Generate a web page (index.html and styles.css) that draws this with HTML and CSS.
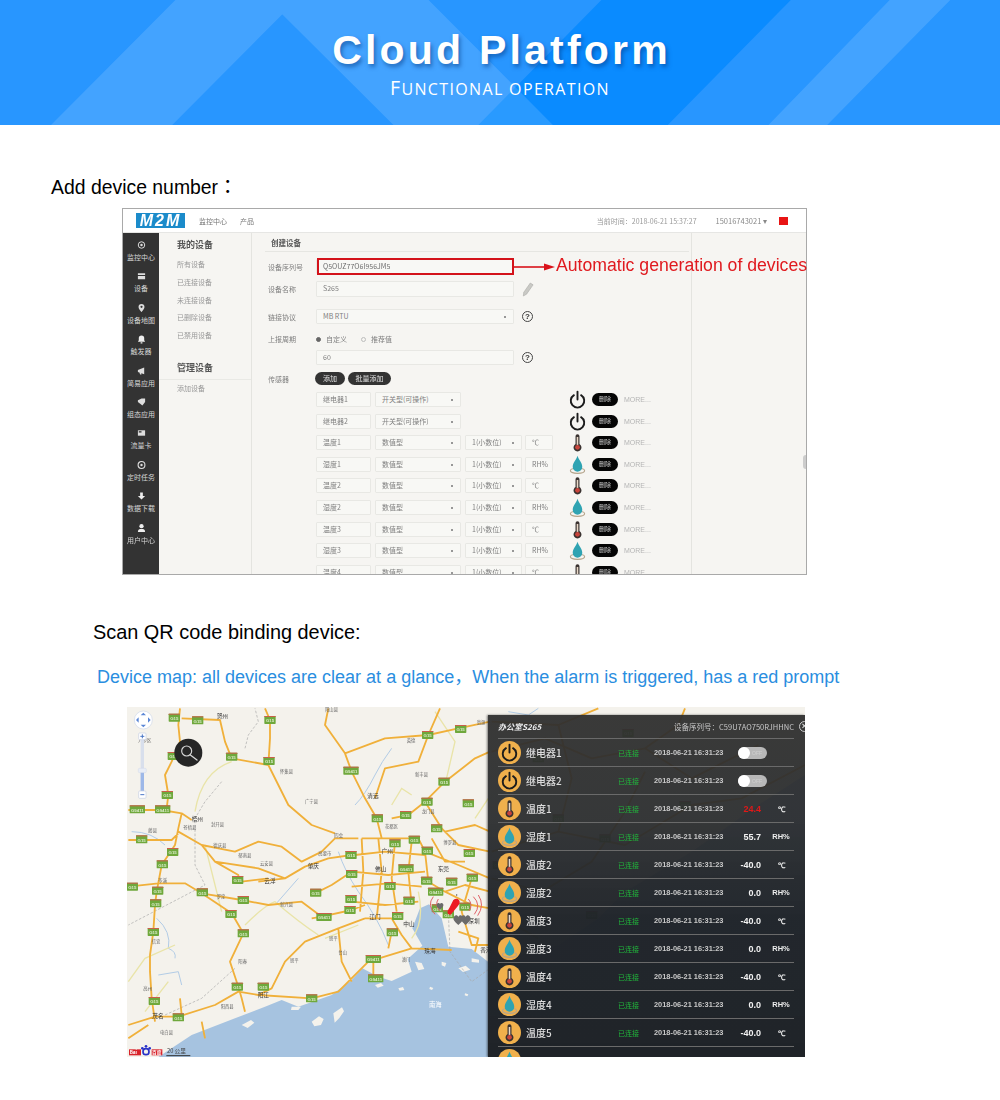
FILE: index.html
```html
<!DOCTYPE html>
<html lang="en">
<head>
<meta charset="utf-8">
<title>Cloud Platform</title>
<link rel="stylesheet" href="styles.css">
</head>
<body>
<svg class="defs" aria-hidden="true">
  <defs>
    <symbol id="power" viewBox="0 0 24 24"><path d="M7.5 6.5a8.5 8.5 0 1 0 9 0M12 2v10" fill="none" stroke="#1c1c1c" stroke-width="2.4" stroke-linecap="round"/></symbol>
    <symbol id="thermo" viewBox="0 0 24 24"><path d="M9.5 14V4a2.5 2.5 0 0 1 5 0v10a5 5 0 1 1-5 0z" fill="#3a3230"/><path d="M11 5h2v10h-2z" fill="#e8d8c8"/><circle cx="12" cy="18" r="3" fill="#c8453c"/></symbol>
    <symbol id="drop" viewBox="0 0 24 24"><ellipse cx="12" cy="20" rx="9" ry="3.2" fill="none" stroke="#b5a58c" stroke-width="1.4"/><path d="M12 1C10 7 6 10 6 15a6 6 0 0 0 12 0c0-5-4-8-6-14z" fill="#2fa3b2"/></symbol>
    <g id="sh"><rect x="-17" y="-12" width="34" height="24" rx="2" fill="#6fa83c"/><rect x="-17" y="-12" width="34" height="3" fill="#c9604a"/><text x="0" y="7" class="sh-t">G15</text></g>
    <g id="shw"><rect x="-23" y="-12" width="46" height="24" rx="2" fill="#6fa83c"/><rect x="-23" y="-12" width="46" height="3" fill="#c9604a"/><text x="0" y="7" class="sh-t">G9411</text></g>
    <g id="heart"><path d="M0 20C-14 8-18 2-12-6-8-11-2-9 0-4 2-9 8-11 12-6 18 2 14 8 0 20z" fill="#6b6b6b"/></g>
  </defs>
</svg>

<header class="banner">
  <svg class="banner-bg" viewBox="0 0 1568 375" preserveAspectRatio="none" aria-hidden="true">
    <rect width="1568" height="375" fill="#0a8bff"/>
    <path d="M0 0H943L750 375H0zM1240 0H1568V375H1047z" fill="#2896ff"/>
    <path d="M275 0H465L270 375H80zM420 0H672L867 375H617zM1395 0H1490L1297 375H1205z" fill="#fff" fill-opacity=".13"/>
  </svg>
  <div class="banner-text">
    <h1 class="title">Cloud Platform</h1>
    <p class="subtitle">Functional operation</p>
  </div>
</header>

<h2 class="step step-a">Add device number：</h2>

<section class="shot">
  <div class="shot-top">
    <div class="logo">M2M</div>
    <span class="topnav">监控中心</span>
    <span class="topnav">产品</span>
    <span class="clock">当前时间：2018-06-21 15:37:27</span>
    <span class="user">15016743021 ▾</span>
    <span class="flag"></span>
  </div>
  <div class="shot-body">
    <nav class="side">
      <div class="side-item"><svg class="side-ic" viewBox="0 0 10 10"><circle cx="5" cy="5" r="3.6" fill="none" stroke="#ddd" stroke-width="1.1"/><circle cx="5" cy="5" r="1.4" fill="#ddd"/></svg>监控中心</div>
      <div class="side-item"><svg class="side-ic" viewBox="0 0 10 10"><path d="M1 2h8v2H1zM1 5h8v3.5H1z" fill="#ddd"/></svg>设备</div>
      <div class="side-item"><svg class="side-ic" viewBox="0 0 10 10"><path d="M5 .5a3.3 3.3 0 0 1 3.3 3.3C8.300 6 5 9.500 5 9.500S1.700 6 1.700 3.800A3.300 3.300 0 0 1 5 .5z" fill="#ddd"/><circle cx="5" cy="3.700" r="1.200" fill="#333"/></svg>设备地图</div>
      <div class="side-item"><svg class="side-ic" viewBox="0 0 10 10"><path d="M5 1a3 3 0 0 1 3 3v2.500L9 8H1l1-1.500V4a3 3 0 0 1 3-3zM4 8.500h2V10H4z" fill="#eee"/></svg>触发器</div>
      <div class="side-item"><svg class="side-ic" viewBox="0 0 10 10"><path d="M1 4l7-3v7.500L1 6zM2.500 6.500h2L5 9H3.500z" fill="#ddd"/></svg>简易应用</div>
      <div class="side-item"><svg class="side-ic" viewBox="0 0 10 10"><path d="M1 3l4-2h4v4L6 9 1 5z" fill="#ddd"/></svg>组态应用</div>
      <div class="side-item"><svg class="side-ic" viewBox="0 0 10 10"><path d="M1 2h8v6H1z" fill="#ddd"/><path d="M2 3h3v1.500H2z" fill="#333"/></svg>流量卡</div>
      <div class="side-item"><svg class="side-ic" viewBox="0 0 10 10"><circle cx="5" cy="5" r="3.800" fill="none" stroke="#ddd" stroke-width="1.200"/><circle cx="5" cy="5" r="1.300" fill="#ddd"/></svg>定时任务</div>
      <div class="side-item"><svg class="side-ic" viewBox="0 0 10 10"><path d="M3.500 1h3v4H9L5 9 1 5h2.500z" fill="#eee"/></svg>数据下载</div>
      <div class="side-item"><svg class="side-ic" viewBox="0 0 10 10"><circle cx="5" cy="3" r="2.400" fill="#eee"/><path d="M1 9.500c0-3 1.500-3.500 4-3.500s4 .5 4 3.500z" fill="#eee"/></svg>用户中心</div>
    </nav>
    <aside class="subnav">
      <h3 class="sub-h">我的设备</h3>
      <p class="sub-i">所有设备</p>
      <p class="sub-i">已连接设备</p>
      <p class="sub-i">未连接设备</p>
      <p class="sub-i">已删除设备</p>
      <p class="sub-i">已禁用设备</p>
      <h3 class="sub-h sub-h2">管理设备</h3>
      <p class="sub-i sub-line">添加设备</p>
    </aside>
    <main class="form">
      <h3 class="form-h">创建设备</h3>
      <div class="row r1"><label class="lab">设备序列号</label><span class="inp inp-w sn">Q5OUZ77O6I956JM5</span></div>
      <div class="row r2"><label class="lab">设备名称</label><span class="inp inp-w">S265</span>
        <svg class="pencil" viewBox="0 0 14 16"><path d="M10 1l3 2-7 10-3.500 2L3 11z" fill="#c9c9c5" stroke="#a8a8a4" stroke-width=".6"/></svg></div>
      <div class="row r3"><label class="lab">链接协议</label><span class="inp inp-w sel">MB RTU</span><span class="help">?</span></div>
      <div class="row r4"><label class="lab">上报周期</label><span class="radio on">自定义</span><span class="radio">推荐值</span></div>
      <div class="row r5"><label class="lab"></label><span class="inp inp-w">60</span><span class="help">?</span></div>
      <div class="row r6"><label class="lab">传感器</label><span class="pill pill-a">添加</span><span class="pill pill-b">批量添加</span></div>

      <div class="row s s1"><label class="lab"></label><span class="inp c1">继电器1</span><span class="inp c2 sel">开关型(可操作)</span><span class="sp"></span><svg class="ic ic-p"><use href="#power"/></svg><span class="del">删除</span><span class="more">MORE...</span></div>
      <div class="row s"><label class="lab"></label><span class="inp c1">继电器2</span><span class="inp c2 sel">开关型(可操作)</span><span class="sp"></span><svg class="ic ic-p"><use href="#power"/></svg><span class="del">删除</span><span class="more">MORE...</span></div>
      <div class="row s"><label class="lab"></label><span class="inp c1">温度1</span><span class="inp c2 sel">数值型</span><span class="inp c3 sel">1(小数位)</span><span class="inp c4">℃</span><svg class="ic"><use href="#thermo"/></svg><span class="del">删除</span><span class="more">MORE...</span></div>
      <div class="row s"><label class="lab"></label><span class="inp c1">湿度1</span><span class="inp c2 sel">数值型</span><span class="inp c3 sel">1(小数位)</span><span class="inp c4">RH%</span><svg class="ic"><use href="#drop"/></svg><span class="del">删除</span><span class="more">MORE...</span></div>
      <div class="row s"><label class="lab"></label><span class="inp c1">温度2</span><span class="inp c2 sel">数值型</span><span class="inp c3 sel">1(小数位)</span><span class="inp c4">℃</span><svg class="ic"><use href="#thermo"/></svg><span class="del">删除</span><span class="more">MORE...</span></div>
      <div class="row s"><label class="lab"></label><span class="inp c1">湿度2</span><span class="inp c2 sel">数值型</span><span class="inp c3 sel">1(小数位)</span><span class="inp c4">RH%</span><svg class="ic"><use href="#drop"/></svg><span class="del">删除</span><span class="more">MORE...</span></div>
      <div class="row s"><label class="lab"></label><span class="inp c1">温度3</span><span class="inp c2 sel">数值型</span><span class="inp c3 sel">1(小数位)</span><span class="inp c4">℃</span><svg class="ic"><use href="#thermo"/></svg><span class="del">删除</span><span class="more">MORE...</span></div>
      <div class="row s"><label class="lab"></label><span class="inp c1">湿度3</span><span class="inp c2 sel">数值型</span><span class="inp c3 sel">1(小数位)</span><span class="inp c4">RH%</span><svg class="ic"><use href="#drop"/></svg><span class="del">删除</span><span class="more">MORE...</span></div>
      <div class="row s"><label class="lab"></label><span class="inp c1">温度4</span><span class="inp c2 sel">数值型</span><span class="inp c3 sel">1(小数位)</span><span class="inp c4">℃</span><svg class="ic"><use href="#thermo"/></svg><span class="del">删除</span><span class="more">MORE...</span></div>
    </main>
    <div class="rest"><span class="grip"></span></div>
  </div>
  <div class="note">
    <span class="note-box"></span>
    <svg class="note-arrow" viewBox="0 0 42 10"><path d="M0 5H32" stroke="#d9121a" stroke-width="1.600"/><path d="M30 1.500L41 5 30 8.500z" fill="#d9121a"/></svg>
    <span class="note-text">Automatic generation of devices</span>
  </div>
</section>

<h2 class="step step-b">Scan QR code binding device:</h2>
<p class="lead">Device map: all devices are clear at a glance，When the alarm is triggered, has a red prompt</p>

<section class="mapshot">
  <svg class="map" viewBox="6 6 2034 1050" aria-hidden="true">
    <rect x="6" y="6" width="2034" height="1050" fill="#f4f2ec"/>
    <path class="sea" d="M100 1056L200 990 330 940 420 905 470 885 520 905 620 870 680 825 712 790 760 815 800 828 860 800 848 762 892 722 862 670 885 610 912 598 950 640 970 725 1040 732 1095 775 1300 720 1420 640 1500 560 1700 440 1900 300 2040 210V1056z"/>
    <path class="isl" d="M560 950l22-16 14 8-8 18-20 4zM625 925l26-18 6 12-14 20-14 14zM500 905l28 0-8 10-22 0zM750 840l18-6 8 8-18 6zM820 850l14-4 4 9-14 2zM870 770l20 4 8 18-18 4zM950 770l14 4-4 11-10-4zM1000 790l22-8 14 12-22 7zM1040 760l22 4 0 9-22-2zM915 845l10 4-4 6-8-3zM1020 865l10 3-3 6-8-3zM350 960l28-15 10 8-20 16z"/>
    <path class="river" d="M20 380Q80 380 120 420M95 640Q140 680 130 730 155 740 150 760M100 810L160 800 170 840M690 300Q720 270 750 210 770 170 800 130M640 440Q660 500 700 560 760 640 790 720M520 520L450 600M1150 20L1210 30 1240 10"/>
    <path class="road-l" d="M210 320Q230 200 320 170M10 830L60 760 150 720M240 420L290 620M360 660Q420 600 450 590 520 650 580 690M600 700L700 660M860 270L830 250 800 300M960 240L990 110 930 20M880 560Q900 650 860 700M1050 340L1090 280M60 920L130 830"/>
    <path class="dash" d="M360 130L370 90 400 50 390 10M290 230L240 290 210 340 210 480 240 540 10 660M330 790L230 880 120 930M970 620L975 740 1040 830 1095 790M1240 890L1480 880"/>
    <path class="road" d="M165 10L160 60 165 110 140 170 120 210 130 270 125 310M170 40L285 45 300 110 320 160 430 180 435 100 435 45 420 10M430 180L460 240 490 300 560 360 630 385M10 315L110 315 170 325 200 345M170 325L160 370 150 420 110 480 95 560 90 600 85 680 75 750 75 800 80 880 90 950M10 405L140 405 160 385M160 380L230 420 270 470 340 510 340 530M230 420L330 440 400 410 470 425 530 470 590 440 630 400 700 400M10 545L100 535 180 535 230 565 350 585 430 600 530 590 590 635 680 615 720 600M270 470L400 490 480 520 540 485 610 460 680 450M400 530L480 520M230 565L320 625 355 685 315 770 340 845 350 880 360 920M10 960L90 935 160 935 270 900 340 860 400 870 440 850 480 770 540 710 640 670 720 640M400 870L560 880 640 860 730 770 860 730 980 735M640 670L650 770 680 830M745 762L745 830M610 10L600 60 660 145 680 200 720 280 755 340 770 400M660 145L780 100 910 90 1000 70 1095 50M945 10L910 90 880 170 780 190 750 280M800 340L850 330 900 290 960 230 1050 160 1095 140M900 290L950 370 1000 420 1095 440M710 400L880 400 900 440 1000 480 1095 520M710 400L715 500 705 620M760 400L770 500 755 640M810 410L800 520 815 620M860 410L850 500 860 600M690 450L780 440 900 450M680 500L790 510 900 500M680 545L790 535 890 545M680 590L780 600 880 590M720 640L800 640 830 690 860 730M800 680L790 730M900 440L910 530 960 560 1040 600 1095 610M1040 520L1010 620 1040 720 1095 720M960 560L1020 540 1095 560M1000 680L1060 700 1050 740M165 880L170 930M240 1000L230 950M10 1000L70 960M570 565L620 540 680 500M350 530L430 520M590 635L560 640M920 400L960 470 1020 470M960 380L1050 360 1095 380"/>
    <path class="road road-far" d="M1100 50L1300 60 1420 10M1100 140L1260 100 1400 160 1560 130 1700 220 1900 120M1100 440L1300 380 1500 420 1700 300 1850 280 2040 180M1100 520L1250 560 1400 470 1500 320 1560 200M1300 60L1340 220 1300 380M1560 130L1660 60 1680 10M1100 620L1240 700"/>

    <use href="#sh" x="148" y="38"/><use href="#sh" x="218" y="46"/><use href="#sh" x="435" y="45"/><use href="#sh" x="320" y="155"/><use href="#sh" x="432" y="168"/><use href="#sh" x="145" y="153"/><use href="#sh" x="127" y="270"/><use href="#shw" x="37" y="313"/><use href="#shw" x="113" y="313"/><use href="#sh" x="50" y="403"/><use href="#sh" x="143" y="441"/><use href="#sh" x="112" y="478"/><use href="#sh" x="22" y="545"/><use href="#sh" x="98" y="557"/><use href="#sh" x="92" y="595"/><use href="#sh" x="85" y="681"/><use href="#sh" x="88" y="888"/><use href="#sh" x="160" y="937"/><use href="#sh" x="338" y="525"/><use href="#sh" x="232" y="562"/><use href="#sh" x="355" y="585"/><use href="#sh" x="318" y="627"/><use href="#sh" x="355" y="685"/><use href="#sh" x="337" y="845"/><use href="#sh" x="415" y="845"/><use href="#sh" x="560" y="880"/><use href="#shw" x="745" y="762"/><use href="#shw" x="752" y="820"/><use href="#shw" x="597" y="636"/><use href="#sh" x="572" y="563"/><use href="#sh" x="678" y="582"/><use href="#sh" x="675" y="615"/><use href="#sh" x="678" y="450"/><use href="#sh" x="680" y="507"/><use href="#shw" x="678" y="197"/><use href="#sh" x="757" y="340"/><use href="#sh" x="842" y="330"/><use href="#sh" x="908" y="90"/><use href="#sh" x="1007" y="72"/><use href="#sh" x="957" y="230"/><use href="#sh" x="906" y="290"/><use href="#sh" x="1030" y="295"/><use href="#sh" x="935" y="370"/><use href="#sh" x="868" y="404"/><use href="#sh" x="810" y="415"/><use href="#sh" x="907" y="437"/><use href="#sh" x="1033" y="444"/><use href="#shw" x="843" y="490"/><use href="#sh" x="905" y="527"/><use href="#sh" x="980" y="530"/><use href="#sh" x="1042" y="518"/><use href="#sh" x="795" y="543"/><use href="#sh" x="852" y="587"/><use href="#shw" x="932" y="560"/><use href="#sh" x="818" y="633"/><use href="#sh" x="802" y="682"/><use href="#sh" x="1020" y="605"/><use href="#sh" x="970" y="628"/><use href="#sh" x="937" y="610"/>
    <use href="#sh" x="1509" y="84"/><use href="#sh" x="1240" y="160"/><use href="#sh" x="1300" y="340"/><use href="#sh" x="1440" y="400"/><use href="#sh" x="1680" y="300"/><use href="#sh" x="1120" y="480"/><use href="#sh" x="1400" y="630"/>

    <g class="lbl-c">
      <text x="275" y="40">贺州</text><text x="200" y="348">梧州</text><text x="727" y="280">清远</text><text x="548" y="488">肇庆</text><text x="770" y="445">广州</text><text x="750" y="497">佛山</text><text x="938" y="497">东莞</text><text x="1030" y="654">深圳</text><text x="835" y="663">中山</text><text x="733" y="642">江门</text><text x="898" y="743">珠海</text><text x="418" y="533">云浮</text><text x="398" y="877">阳江</text><text x="82" y="940">茂名</text><text x="1066" y="742">香港</text>
    </g>
    <g class="lbl-m">
      <text x="600" y="18">阳山县</text><text x="845" y="112">英德</text><text x="465" y="203">怀集县</text><text x="540" y="293">广宁县</text><text x="870" y="212">新丰县</text><text x="890" y="323">龙门县</text><text x="780" y="370">花都区</text><text x="628" y="395">四会</text><text x="175" y="372">苍梧县</text><text x="258" y="363">封开县</text><text x="70" y="380">藤县</text><text x="265" y="427">德庆县</text><text x="340" y="456">郁南县</text><text x="405" y="480">云安县</text><text x="580" y="450">高要市</text><text x="955" y="417">博罗县</text><text x="100" y="530">岑溪</text><text x="275" y="578">罗定</text><text x="465" y="602">新兴县</text><text x="612" y="706">恩平</text><text x="640" y="748">台山</text><text x="340" y="774">阳春</text><text x="495" y="770">恩平</text><text x="80" y="713">信宜</text><text x="55" y="855">高州</text><text x="287" y="909">阳西县</text><text x="105" y="987">电白县</text><text x="830" y="768">澳门</text><text x="40" y="110">八步区</text><text x="1055" y="58">翁源</text>
    </g>
    <text x="912" y="906" class="lbl-s">南海</text>

    <g class="marks">
      <path class="arc" d="M925 575Q905 600 930 628M940 582Q928 600 945 618M1045 575Q1070 600 1048 628M1030 582Q1045 600 1032 618M1060 570Q1080 600 1058 632"/>
      <use href="#heart" transform="translate(945 600) scale(.7)"/>
      <use href="#heart" transform="translate(1000 640)"/>
      <use href="#heart" transform="translate(1022 640)"/>
      <path d="M985 585q10-8 17 0 6 9-5 20l-20 24q-6 2-10-6 1-8 6-14z" fill="#ec1c24"/>
      <circle cx="995" cy="570" r="2" fill="#444"/>
    </g>

    <g class="ctl">
      <circle cx="55" cy="45" r="27" fill="#fff" stroke="#cfd8ea" stroke-width="2"/>
      <path d="M55 23l-8 8h16zM55 67l-8-8h16zM33 45l8-8v16zM77 45l-8-8v16z" fill="#5a86d6"/>
      <rect x="47" y="100" width="10" height="165" fill="#d8dfec"/>
      <rect x="47" y="200" width="10" height="65" fill="#9db8e8"/>
      <rect x="41" y="84" width="22" height="20" rx="3" fill="#fff" stroke="#c5cfe2" stroke-width="2"/>
      <rect x="41" y="258" width="22" height="22" rx="3" fill="#fff" stroke="#c5cfe2" stroke-width="2"/>
      <rect x="40" y="190" width="24" height="13" rx="3" fill="#e8edf6" stroke="#c5cfe2"/>
      <path d="M52 88v12M46 94h12M46 269h12" stroke="#4a76c6" stroke-width="3"/>
    </g>

    <circle cx="190" cy="143" r="42" fill="#262626"/>
    <circle cx="185" cy="138" r="15" fill="none" stroke="#d6d6d6" stroke-width="3.500"/>
    <path d="M196 150l20 15" stroke="#d6d6d6" stroke-width="4" stroke-linecap="round"/>

    <rect x="12" y="1033" width="36" height="18" fill="#d8232a"/>
    <text x="14" y="1048" class="bd">Bai</text>
    <g fill="#2932c8"><circle cx="63" cy="1040" r="9" fill="none" stroke="#2932c8" stroke-width="5"/><circle cx="52" cy="1030" r="4"/><circle cx="74" cy="1030" r="4"/><circle cx="63" cy="1024" r="4"/></g>
    <rect x="80" y="1033" width="32" height="18" fill="#d8232a"/>
    <text x="81" y="1048" class="bd">百度</text>
    <text x="126" y="1044" class="scale">20 公里</text>
    <path d="M124 1052h72" stroke="#333" stroke-width="3"/>
  </svg>

  <div class="overlay">
    <div class="ov-head"><span class="ov-name">办公室S265</span><span class="ov-sn">设备序列号：C59U7AO750RJHHNC</span><span class="ov-x">×</span></div>
    <div class="dv"><span class="dot"><svg class="dot-ic"><use href="#power"/></svg></span><span class="dv-name">继电器1</span><span class="dv-st">已连接</span><span class="dv-date">2018-06-21 16:31:23</span><span class="tog"><i class="knob"></i>OFF</span></div>
    <div class="dv"><span class="dot"><svg class="dot-ic"><use href="#power"/></svg></span><span class="dv-name">继电器2</span><span class="dv-st">已连接</span><span class="dv-date">2018-06-21 16:31:23</span><span class="tog"><i class="knob"></i>OFF</span></div>
    <div class="dv"><span class="dot"><svg class="dot-ic"><use href="#thermo"/></svg></span><span class="dv-name">温度1</span><span class="dv-st">已连接</span><span class="dv-date">2018-06-21 16:31:23</span><span class="dv-val alarm">24.4</span><span class="dv-unit">℃</span></div>
    <div class="dv"><span class="dot"><svg class="dot-ic"><use href="#drop"/></svg></span><span class="dv-name">湿度1</span><span class="dv-st">已连接</span><span class="dv-date">2018-06-21 16:31:23</span><span class="dv-val">55.7</span><span class="dv-unit">RH%</span></div>
    <div class="dv"><span class="dot"><svg class="dot-ic"><use href="#thermo"/></svg></span><span class="dv-name">温度2</span><span class="dv-st">已连接</span><span class="dv-date">2018-06-21 16:31:23</span><span class="dv-val">-40.0</span><span class="dv-unit">℃</span></div>
    <div class="dv"><span class="dot"><svg class="dot-ic"><use href="#drop"/></svg></span><span class="dv-name">湿度2</span><span class="dv-st">已连接</span><span class="dv-date">2018-06-21 16:31:23</span><span class="dv-val">0.0</span><span class="dv-unit">RH%</span></div>
    <div class="dv"><span class="dot"><svg class="dot-ic"><use href="#thermo"/></svg></span><span class="dv-name">温度3</span><span class="dv-st">已连接</span><span class="dv-date">2018-06-21 16:31:23</span><span class="dv-val">-40.0</span><span class="dv-unit">℃</span></div>
    <div class="dv"><span class="dot"><svg class="dot-ic"><use href="#drop"/></svg></span><span class="dv-name">湿度3</span><span class="dv-st">已连接</span><span class="dv-date">2018-06-21 16:31:23</span><span class="dv-val">0.0</span><span class="dv-unit">RH%</span></div>
    <div class="dv"><span class="dot"><svg class="dot-ic"><use href="#thermo"/></svg></span><span class="dv-name">温度4</span><span class="dv-st">已连接</span><span class="dv-date">2018-06-21 16:31:23</span><span class="dv-val">-40.0</span><span class="dv-unit">℃</span></div>
    <div class="dv"><span class="dot"><svg class="dot-ic"><use href="#drop"/></svg></span><span class="dv-name">湿度4</span><span class="dv-st">已连接</span><span class="dv-date">2018-06-21 16:31:23</span><span class="dv-val">0.0</span><span class="dv-unit">RH%</span></div>
    <div class="dv"><span class="dot"><svg class="dot-ic"><use href="#thermo"/></svg></span><span class="dv-name">温度5</span><span class="dv-st">已连接</span><span class="dv-date">2018-06-21 16:31:23</span><span class="dv-val">-40.0</span><span class="dv-unit">℃</span></div>
    <div class="dv"><span class="dot"><svg class="dot-ic"><use href="#drop"/></svg></span></div>
  </div>
</section>
</body>
</html>
```
FILE: styles.css
```css
* { box-sizing: border-box; }
html, body { margin: 0; padding: 0; }
body {
  width: 1000px;
  height: 1100px;
  overflow: hidden;
  background: #fff;
  font-family: "Liberation Sans", "Noto Sans CJK SC", sans-serif;
  color: #000;
}
.defs { position: absolute; width: 0; height: 0; }

/* Banner */
.banner { display: grid; height: 125px; overflow: hidden; }
.banner-bg { grid-area: 1 / 1; width: 1000px; height: 125px; display: block; filter: blur(.5px); }
.banner-text { grid-area: 1 / 1; z-index: 1; text-align: center; color: #fff; padding-top: 27px; }
.title {
  margin: 0;
  font-size: 41px;
  line-height: 46px;
  font-weight: 700;
  letter-spacing: 3.2px;
  padding-left: 3px;
  text-shadow: 2px 3px 4px rgba(0, 50, 120, .5);
}
.subtitle {
  margin: 3px 0 0;
  font-family: "Open Sans", "Liberation Sans", sans-serif;
  font-size: 16px;
  line-height: 24px;
  text-transform: uppercase;
  letter-spacing: 1.35px;
}
.subtitle::first-letter { font-size: 19.5px; }

/* Headings */
.step { margin: 0; line-height: 24px; font-weight: 400; font-family: "Liberation Sans", "Noto Sans CJK TC", sans-serif; }
.step-a { margin: 50px 0 0 51px; font-size: 19.4px; }
.step-b { margin: 45px 0 0 93px; font-size: 19.9px; }
.lead { margin: 21px 0 0 97px; font-size: 18px; line-height: 24px; color: #2a8ee0; white-space: nowrap; }

/* Panel 1 */
.shot {
  position: relative;
  width: 685px;
  height: 367px;
  margin: 9px 0 0 122px;
  border: 1px solid #a9a9a9;
  font-family: "Noto Sans CJK SC", "Liberation Sans", sans-serif;
  font-size: 7px;
  color: #808080;
  background: #f6f5f2;
}
.shot-top {
  display: flex;
  align-items: center;
  height: 24px;
  padding-left: 13px;
  background: #fff;
  border-bottom: 1px solid #e6e6e4;
  filter: blur(.45px);
}
.logo {
  width: 49px;
  height: 15px;
  margin-right: 14px;
  background: #1b8bca;
  color: #fff;
  font: italic 700 16px/15px "Liberation Sans", sans-serif;
  letter-spacing: 2px;
  text-align: center;
}
.topnav { margin-right: 13px; color: #777; }
.clock { margin-left: auto; margin-right: -1px; color: #999; font-size: 7px; }
.user { margin: 0 12px 0 20px; color: #888; font-size: 7.500px; }
.flag { width: 9px; height: 8px; margin-right: 18px; background: #e81414; }
.shot-body { display: flex; height: 341px; overflow: hidden; filter: blur(.45px); }

.side { flex: 0 0 36px; background: #333; color: #d5d5d5; padding-top: 7px; }
.side-item { display: flex; flex-direction: column; align-items: center; height: 31.4px; line-height: 9px; gap: 3px; white-space: nowrap; font-size: 7px; }
.side-ic { width: 9px; height: 10px; flex: none; }

.subnav { flex: 0 0 93px; padding: 6px 0 0 18px; border-right: 1px solid #e4e4e0; }
.sub-h { margin: 0; font-size: 9px; line-height: 12px; font-weight: 700; color: #555; }
.sub-i { margin: 0; height: 17.8px; line-height: 17.8px; color: #999; }
.sub-h + .sub-i { margin-top: 5px; }
.sub-h2 { margin-top: 17px; }
.sub-h2 + .sub-i { margin: 5px 0 0 -18px; padding-left: 18px; border-top: 1px solid #e9e9e5; }

.form { flex: 0 0 440px; padding-left: 16px; border-right: 1px solid #e4e4e0; }
.form-h { margin: 0 2px 0 -3px; height: 19px; line-height: 19px; font-size: 7.5px; font-weight: 700; color: #555; padding-left: 6px; border-bottom: 1px solid #e6e6e2; }
.row { display: flex; align-items: center; height: 15px; }
.r1 { margin-top: 7px; }
.r2 { margin-top: 7px; height: 16px; }
.r3 { margin-top: 12px; }
.r4 { margin-top: 8px; height: 14px; }
.r5 { margin-top: 4px; }
.r6 { margin-top: 7px; height: 13px; }
.s { margin-top: 6.6px; }
.s1 { margin-top: 7px; }
.lab { flex: 0 0 48px; color: #808080; }
.inp {
  display: block;
  height: 100%;
  line-height: 13px;
  padding-left: 6px;
  border: 1px solid #e8e8e4;
  border-radius: 1px;
  background: #f8f8f5;
  color: #808080;
  white-space: nowrap;
}
.inp-w { flex: 0 0 198px; }
.sn { font-size: 7px; color: #6e6e6e; }
.sel { position: relative; }
.sel::after { content: ""; position: absolute; right: 7px; top: 6px; width: 2px; height: 2px; background: #777; border-radius: 50%; }
.pencil { width: 13px; height: 15px; margin-left: 7px; }
.help {
  width: 11px;
  height: 11px;
  margin-left: 8px;
  border: 1.200px solid #444;
  border-radius: 50%;
  font: 700 8px/9px "Liberation Sans", sans-serif;
  color: #333;
  text-align: center;
}
.radio { color: #808080; margin-right: 14px; display: flex; align-items: center; gap: 5px; }
.radio::before { content: ""; width: 3px; height: 3px; border-radius: 50%; border: 1px solid #bbb; margin-left: 0; }
.radio.on::before { background: #666; border-color: #666; }
.pill { height: 13px; line-height: 12px; border-radius: 7px; background: #333; color: #e2e2e2; text-align: center; }
.pill-a { width: 30px; margin-right: 3px; margin-left: -1px; }
.pill-b { width: 43px; }
.c1 { flex: 0 0 55px; margin-right: 4px; }
.c2 { flex: 0 0 86px; margin-right: 4px; }
.c3 { flex: 0 0 57px; margin-right: 3px; }
.c4 { flex: 0 0 28px; }
.sp { flex: 0 0 88px; }
.ic { flex: 0 0 19px; width: 19px; height: 19px; margin: 0 5px 0 15px; }
.ic-p { }
.del {
  flex: 0 0 26px;
  height: 13px;
  line-height: 12px;
  border-radius: 7px;
  background: #050505;
  color: #c8c8c8;
  text-align: center;
  font-size: 6px;
}
.more { margin-left: 6px; color: #b5b5b5; font: 7px "Liberation Sans", sans-serif; }
.rest { position: relative; flex: 1; }
.grip { position: absolute; right: 0; top: 222px; width: 3px; height: 14px; border-radius: 3px 0 0 3px; background: #ccc; }

.note { position: absolute; left: 194px; top: 49px; display: flex; align-items: center; height: 17px; white-space: nowrap; font-family: "Liberation Sans", sans-serif; }
.note-box { width: 197px; height: 17px; border: 2px solid #d3121a; flex: none; }
.note-arrow { width: 42px; height: 10px; flex: none; }
.note-text { margin: -2px 0 0 0; color: #e01a1f; font-size: 17.650px; line-height: 17px; }

/* Panel 2 */
.mapshot {
  position: relative;
  width: 678px;
  height: 350px;
  margin: 18px 0 0 127px;
  overflow: hidden;
  font-family: "Noto Sans CJK SC", "Liberation Sans", sans-serif;
}
.map { display: block; width: 678px; height: 350px; filter: blur(.4px); }
.sea { fill: #a6c3e0; }
.isl { fill: #f4f2ec; }
.river { fill: none; stroke: #b2cce6; stroke-width: 3; }
.road-l { fill: none; stroke: #e9e4a8; stroke-width: 4; }
.dash { fill: none; stroke: #a8a8a8; stroke-width: 2; stroke-dasharray: 8 5; }
.road { fill: none; stroke: #f0b03a; stroke-width: 5.500; stroke-linejoin: round; }
.sh-t { font: 700 13px "Liberation Sans", sans-serif; fill: #dbeccb; text-anchor: middle; }
.lbl-c text { font-size: 17px; fill: #333; }
.lbl-m text { font-size: 13px; fill: #666; }
.lbl-s { font-size: 19px; fill: #fff; }
.arc { fill: none; stroke: #e0646a; stroke-width: 3; }
.bd { font: 700 14px "Noto Sans CJK SC", sans-serif; fill: #fff; }
.scale { font-size: 17px; fill: #444; }

.overlay {
  position: absolute;
  left: 361px;
  top: 8px;
  width: 317px;
  height: 342px;
  overflow: hidden;
  padding-left: 10px;
  color: #ddd;
  background: linear-gradient(#2f2f2ff2, #2b2d2ff2 30%, #202429fa 60%, #1f2328);
  box-shadow: -1px 0 2px rgba(0, 0, 0, .5);
  filter: blur(.4px);
}
.ov-head { position: relative; display: flex; align-items: center; justify-content: space-between; width: 296px; height: 23px; }
.ov-name { font-size: 8px; font-weight: 700; font-style: italic; color: #eee; }
.ov-sn { font-size: 7.500px; color: #c8c8c8; }
.ov-x {
  position: absolute;
  left: 301px;
  top: 6px;
  width: 11px;
  height: 11px;
  border-radius: 50%;
  border: 1px solid #ccc;
  font: 700 9px/9px "Liberation Sans", sans-serif;
  text-align: center;
  color: #ddd;
}
.dv {
  position: relative;
  display: flex;
  align-items: center;
  width: 296px;
  height: 28px;
  border-top: 1px solid #6a6a6a;
}
.dot {
  flex: 0 0 23px;
  width: 23px;
  height: 23px;
  display: flex;
  align-items: center;
  justify-content: center;
  border-radius: 50%;
  background: #f0b04c;
}
.dot-ic { width: 19px; height: 19px; }
.dv-name { flex: 0 0 97px; padding-left: 5px; font-size: 10px; font-weight: 500; color: #ddd; }
.dv-st { flex: 0 0 36px; font-size: 7px; color: #21b53b; }
.dv-date { flex: 0 0 84px; font: 700 7.400px "Liberation Sans", sans-serif; color: #c9c9c9; white-space: nowrap; }
.dv-val { flex: 0 0 23px; text-align: right; font: 700 9px "Liberation Sans", sans-serif; color: #f2f2f2; }
.alarm { color: #e01818; }
.dv-unit { flex: 0 0 24px; margin-left: 8px; text-align: center; font: 700 7.500px "Liberation Sans", sans-serif; color: #eee; }
.tog {
  display: flex;
  align-items: center;
  justify-content: flex-end;
  width: 29px;
  height: 12px;
  padding-right: 5px;
  border-radius: 6px;
  background: #b8b8b8;
  color: #d0d0d0;
  font: 5px "Liberation Sans", sans-serif;
}
.knob { width: 12px; height: 12px; margin-right: auto; border-radius: 50%; background: #fff; }
```
